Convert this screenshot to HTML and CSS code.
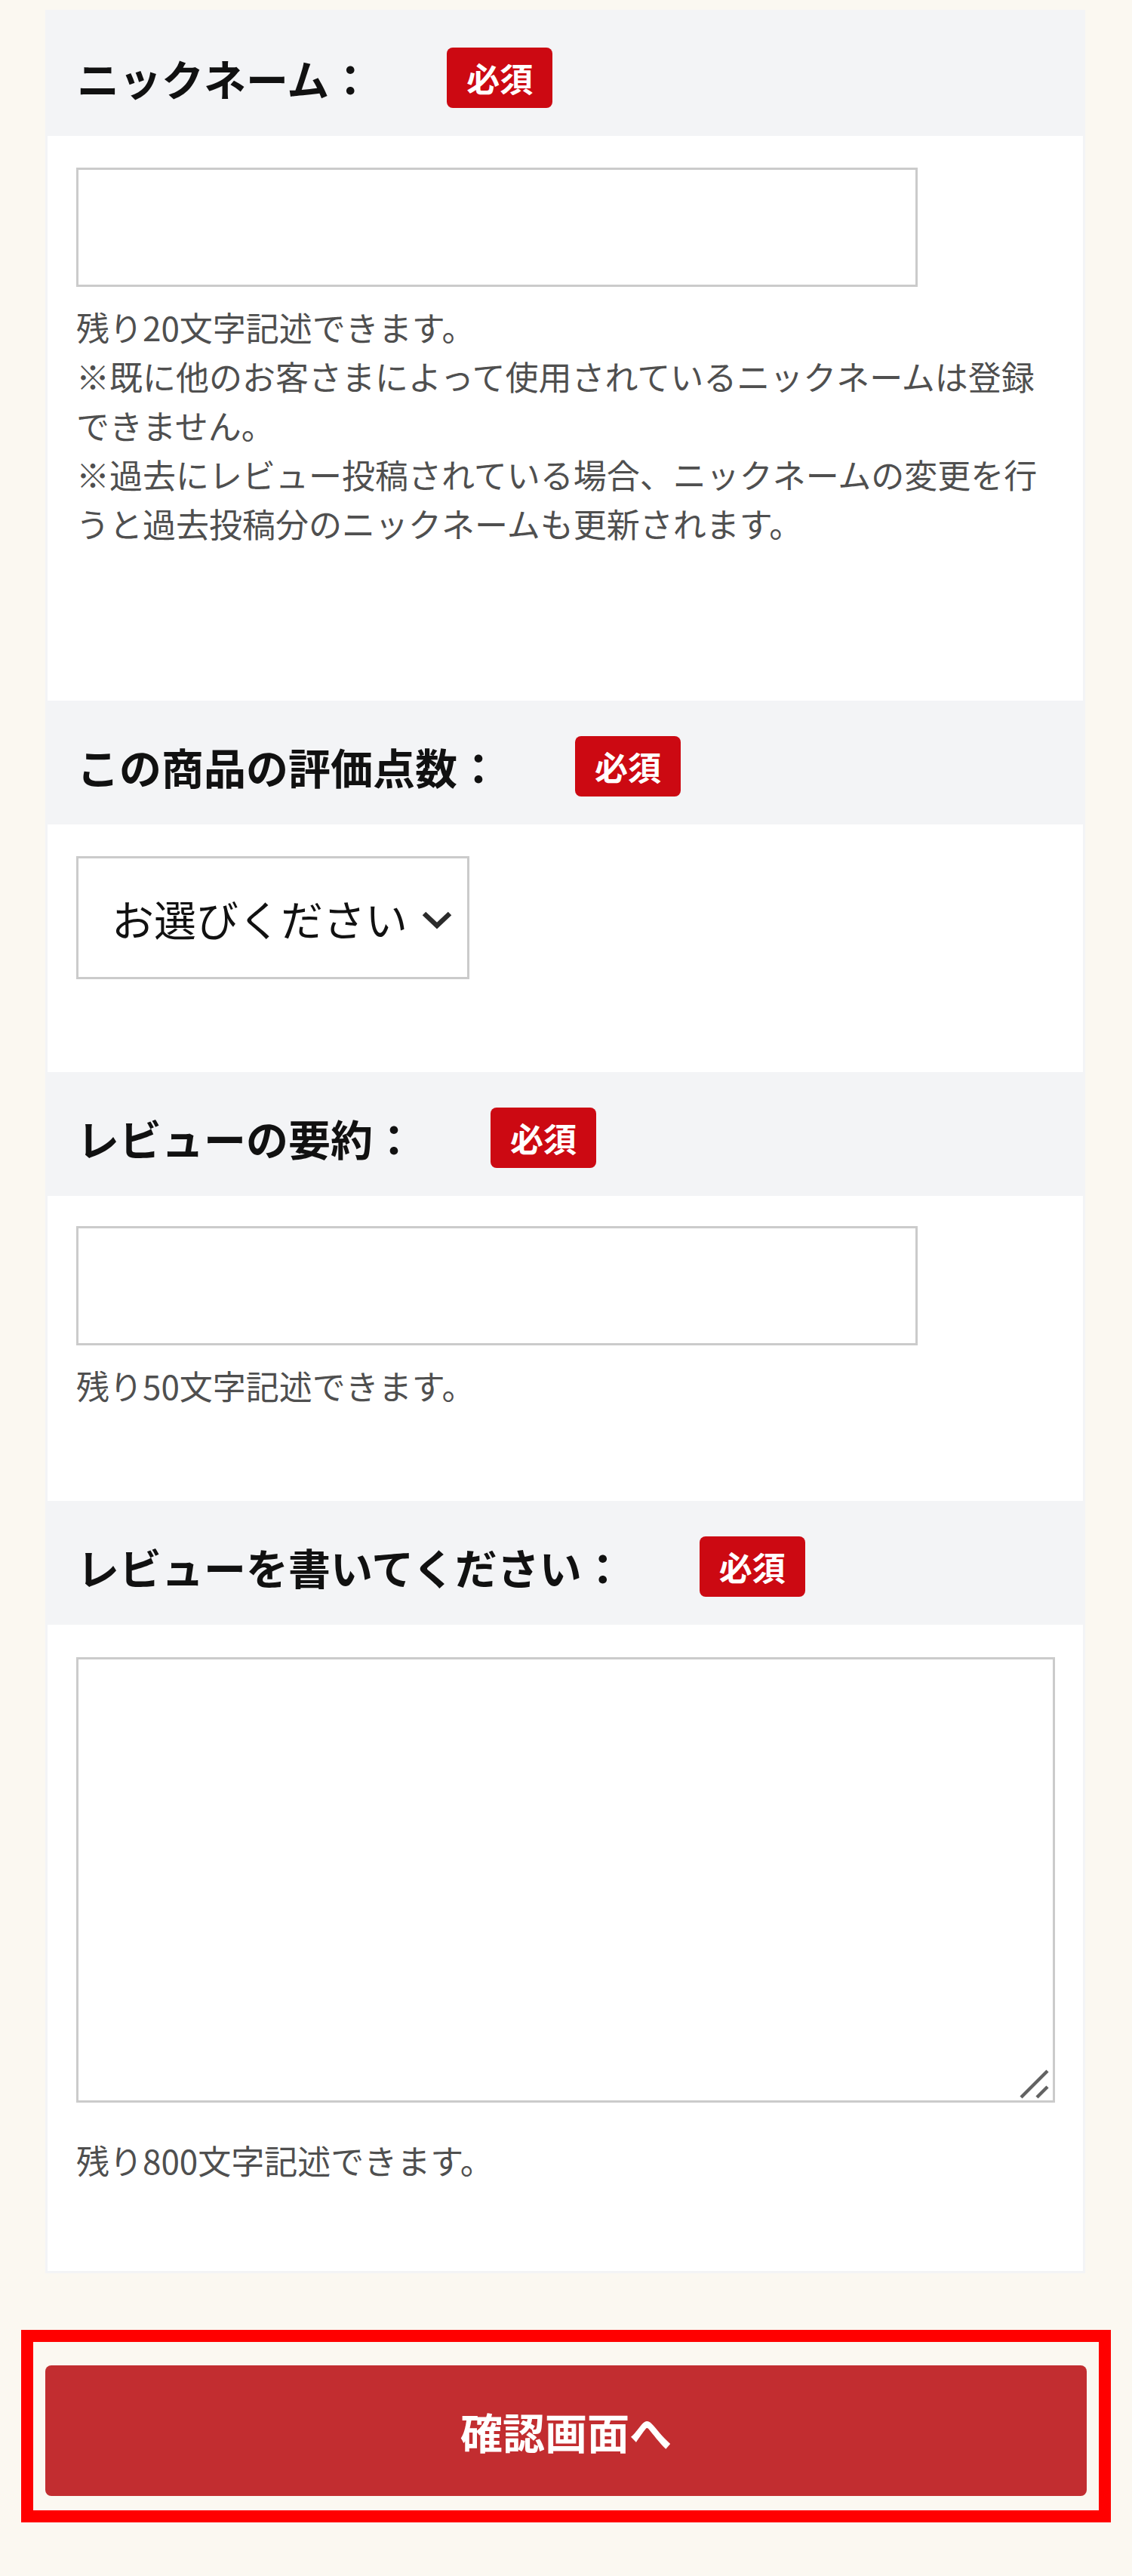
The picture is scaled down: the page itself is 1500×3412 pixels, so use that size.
FILE: index.html
```html
<!DOCTYPE html>
<html lang="ja">
<head>
<meta charset="utf-8">
<title>レビュー投稿</title>
<link rel="stylesheet" href="styles.css">
</head>
<body>
<div class="card">
  <section class="field">
    <div class="field-head"><span class="field-label">ニックネーム：</span><span class="badge">必須</span></div>
    <div class="field-body field-body--nick">
      <input class="text-input" type="text">
      <p class="note note--after-input">残り20文字記述できます。<br>※既に他のお客さまによって使用されているニックネームは登録できません。<br>※過去にレビュー投稿されている場合、ニックネームの変更を行うと過去投稿分のニックネームも更新されます。</p>
    </div>
  </section>
  <section class="field">
    <div class="field-head"><span class="field-label">この商品の評価点数：</span><span class="badge">必須</span></div>
    <div class="field-body field-body--score">
      <div class="select-wrap">
        <select class="select">
          <option>お選びください</option>
          <option>5</option>
          <option>4</option>
          <option>3</option>
          <option>2</option>
          <option>1</option>
        </select>
        <svg class="select-chevron" width="42" height="26" viewBox="0 0 42 26"><polyline points="4,5 21,21 38,5" fill="none" stroke="#2b2b2b" stroke-width="6.5"/></svg>
      </div>
    </div>
  </section>
  <section class="field">
    <div class="field-head"><span class="field-label">レビューの要約：</span><span class="badge">必須</span></div>
    <div class="field-body field-body--summary">
      <input class="text-input" type="text">
      <p class="note note--after-input">残り50文字記述できます。</p>
    </div>
  </section>
  <section class="field">
    <div class="field-head"><span class="field-label">レビューを書いてください：</span><span class="badge">必須</span></div>
    <div class="field-body field-body--review">
      <div class="textarea-wrap">
        <textarea class="textarea"></textarea>
        <svg class="resize-grip" width="50" height="50" viewBox="0 0 50 50"><line x1="5" y1="43" x2="40" y2="8" stroke="#626262" stroke-width="4.5"/><line x1="26" y1="43" x2="40" y2="29" stroke="#626262" stroke-width="4.5"/></svg>
      </div>
      <p class="note note--after-textarea">残り800文字記述できます。</p>
    </div>
  </section>
</div>
<div class="submit-frame">
  <button class="submit-btn" type="button">確認画面へ</button>
</div>
</body>
</html>
```
FILE: styles.css
```css
html, body {
  margin: 0;
  padding: 0;
}
body {
  background: #fbf8f1;
  font-family: "Noto Sans CJK JP", "Noto Sans", sans-serif;
  color: #111;
}
.card {
  margin: 13px 62px 0 60px;
  background: #fff;
  border: 3px solid #f3f4f6;
}
.field-head {
  box-sizing: border-box;
  height: 164px;
  padding: 10px 0 0 39px;
  background: #f3f4f6;
  display: flex;
  align-items: center;
}
.field-label {
  font-size: 56px;
  font-weight: 700;
  line-height: 80px;
  color: #111;
}
.badge {
  margin-left: 100px;
  height: 80px;
  padding: 0 26px;
  border-radius: 8px;
  background: #cc0912;
  color: #fff;
  font-size: 44px;
  font-weight: 700;
  line-height: 80px;
}
.field-body {
  padding: 42px 37px 0 38px;
}
.field-body--nick { padding-bottom: 202px; }
.field-body--score { padding-bottom: 123px; }
.field-body--summary { padding-top: 40px; padding-bottom: 120px; }
.field-body--review { padding-top: 43px; padding-bottom: 114px; }
.text-input {
  display: block;
  box-sizing: border-box;
  width: 1115px;
  height: 158px;
  margin: 0;
  border: 3px solid #cbcbcb;
  background: #fff;
  font-family: inherit;
  font-size: 56px;
  padding: 0 20px;
}
.note {
  margin: 0;
  font-size: 44px;
  line-height: 65px;
  color: #4f4f4f;
}
.note--after-input { margin-top: 21px; }
.note--after-textarea { margin-top: 44px; }
.select-wrap {
  position: relative;
  width: 521px;
  height: 163px;
}
.select {
  display: block;
  box-sizing: border-box;
  width: 100%;
  height: 100%;
  margin: 0;
  padding: 0 0 0 44px;
  border: 3px solid #cbcbcb;
  border-radius: 0;
  background: #fff;
  -webkit-appearance: none;
  appearance: none;
  font-family: inherit;
  font-size: 56px;
  color: #111;
}
.select-chevron {
  position: absolute;
  right: 22px;
  top: 71px;
  pointer-events: none;
}
.textarea-wrap {
  position: relative;
}
.textarea {
  display: block;
  box-sizing: border-box;
  width: 100%;
  height: 590px;
  margin: 0;
  border: 3px solid #cbcbcb;
  background: #fff;
  resize: none;
  font-family: inherit;
  font-size: 44px;
}
.resize-grip {
  position: absolute;
  right: 0;
  bottom: 0;
  pointer-events: none;
}
.submit-frame {
  margin: 75px 28px 0 28px;
  border: 16px solid #ff0000;
  padding: 31px 16px 19px 16px;
}
.submit-btn {
  display: block;
  width: 100%;
  height: 173px;
  margin: 0;
  border: 0;
  border-radius: 8px;
  background: #c22d30;
  color: #fff;
  font-family: inherit;
  font-size: 56px;
  font-weight: 700;
  cursor: pointer;
}
```
